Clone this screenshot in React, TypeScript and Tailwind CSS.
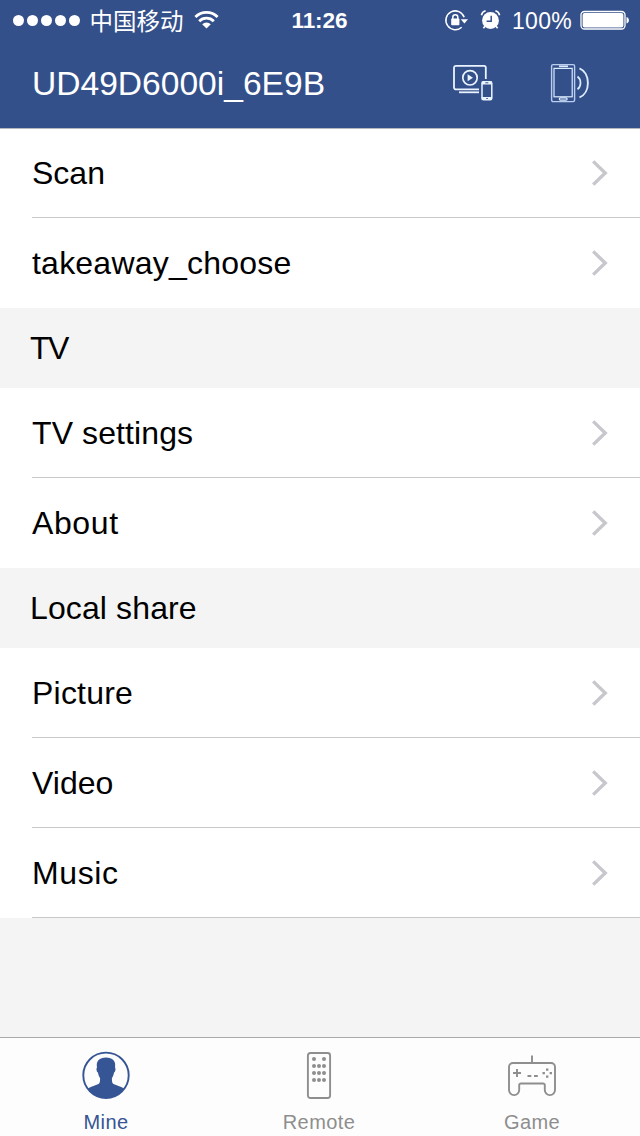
import React from 'react';

function StatusBar() {
  return (
    <div className="flex h-10 items-center text-white">
      <div className="ml-[12.5px] flex w-[68px] items-center gap-[3.1px]">
        {[0, 1, 2, 3, 4].map((dot) => (
          <span key={dot} className="h-[11px] w-[11px] shrink-0 rounded-full bg-white" />
        ))}
      </div>
      <span className="ml-[9px] w-[96px] font-['Noto_Sans_CJK_SC',sans-serif] text-[23.5px] leading-10 font-normal whitespace-nowrap">
        中国移动
      </span>
      <svg className="ml-[8.5px] h-[18px] w-[25px]" viewBox="0 0 25 18" fill="none" stroke="white">
        <path d="M1.4 6.1a15.6 15.6 0 0 1 22.2 0" strokeWidth="2.8" />
        <path d="M5.2 10.2a10.2 10.2 0 0 1 14.6 0" strokeWidth="2.8" />
        <path d="M12.5 17.4l-4.3-4.2a6 6 0 0 1 8.6 0z" fill="white" stroke="none" />
      </svg>
      <span className="ml-[72.5px] w-[58px] pt-0.5 text-[22.5px] leading-10 font-bold tracking-[-0.1px] whitespace-nowrap">
        11:26
      </span>
      <svg className="ml-[94.5px] h-6 w-6" viewBox="0 0 24 24" fill="none" stroke="white" strokeWidth="1.5">
        <path d="M20.2 9.3A9.4 9.4 0 1 0 17.7 19.2" />
        <path d="M16.8 11.2h7.2l-3.6 4.4z" fill="white" stroke="none" />
        <rect x="7.2" y="10.6" width="8.2" height="6.6" rx=".7" fill="white" stroke="none" />
        <path d="M8.8 11.4V9.2a2.5 2.5 0 0 1 5 0v2.2" />
      </svg>
      <svg className="ml-[12px] h-6 w-[22px]" viewBox="0 0 22 24" fill="none" stroke="white">
        <circle cx="10.5" cy="12.5" r="8.4" fill="white" stroke="none" />
        <path d="M1.4 7.2a6 6 0 0 1 4.2-4.4M19.6 7.2a6 6 0 0 0-4.2-4.4" strokeWidth="1.6" />
        <path d="M4.9 18.2l-1.5 2.1M16.1 18.2l1.5 2.1" strokeWidth="1.6" />
        <path d="M11.2 7.8v5.5H6.6" stroke="#34508a" strokeWidth="1.5" />
      </svg>
      <span className="ml-[10px] w-[62px] pt-0.5 text-[23px] leading-10 tracking-[0.3px] whitespace-nowrap">100%</span>
      <svg className="ml-[5.5px] h-5 w-[50px]" viewBox="0 0 50 20" fill="none">
        <rect x="1" y="1.5" width="44" height="17.5" rx="3.5" stroke="white" strokeWidth="1.3" />
        <rect x="2.6" y="3.1" width="40.8" height="14.3" rx="2" fill="white" />
        <path d="M46.5 7c3.2 1 3.2 5.6 0 6.6z" fill="white" />
      </svg>
    </div>
  );
}

function CastIcon() {
  return (
    <svg className="h-[38px] w-[42px]" viewBox="0 0 42 38" fill="none" stroke="#e9f4ff">
      <path d="M27 25.4H4a2 2 0 0 1-2-2V3.8a2 2 0 0 1 2-2h28a1.8 1.8 0 0 1 1.8 1.8V15" strokeWidth="1.8" />
      <path d="M7 28.3h20" strokeWidth="1.8" />
      <circle cx="18" cy="13.8" r="7.2" strokeWidth="1.7" />
      <path d="M15.6 10.3v7l5.4-3.5z" fill="#e9f4ff" stroke="none" />
      <rect x="30" y="17.7" width="9.8" height="18" rx="1.5" strokeWidth="1.5" />
      <path d="M29.8 19h10M29.8 34.3h10" strokeWidth="2.8" />
      <path d="M33.3 18.8h3M34.3 34.5h1.5" stroke="#34508a" />
    </svg>
  );
}

function PhoneWaveIcon() {
  return (
    <svg className="-mt-px h-10 w-[42px]" viewBox="0 0 42 40" fill="none" stroke="#dcecff">
      <rect x="1.6" y="1.6" width="23" height="37" rx="1.5" strokeWidth="1.4" stroke="#b9cdf0" />
      <rect x="4" y="5.4" width="18.2" height="28.4" strokeWidth="1.2" />
      <path d="M9 3.3h9" strokeWidth="1.7" />
      <rect x="9.3" y="34.9" width="7.8" height="2.2" rx="1" strokeWidth="1.2" />
      <path d="M27.5 13.5c4 3 4 9.8 0 12.8" strokeWidth="1.7" />
      <path d="M29.5 5.4c11.2 4.6 11.2 24.4 0 29" strokeWidth="1.9" />
    </svg>
  );
}

type RowProps = { label: string; tracking?: string; divided?: boolean };

function Row({ label, tracking = 'tracking-[0.22px]', divided = true }: RowProps) {
  return (
    <div className="h-[90px] bg-white pl-8">
      <div
        className={`flex h-full items-center justify-between border-b pr-[31px] ${divided ? 'border-[#c9c9cb]' : 'border-transparent'}`}
      >
        <span className={`text-[32px] leading-[90px] ${tracking}`}>{label}</span>
        <svg className="mt-px h-7 w-[18px]" viewBox="0 0 18 28" fill="none" stroke="#c7c7cc" strokeWidth="3.4">
          <path d="M2.2 2.4L14.2 14 2.2 25.6" />
        </svg>
      </div>
    </div>
  );
}

function SectionTitle({ label, tracking }: { label: string; tracking: string }) {
  return <h2 className={`h-20 bg-[#f4f4f4] pl-[30px] text-[32px] leading-[80px] ${tracking}`}>{label}</h2>;
}

function MineIcon() {
  return (
    <svg className="-ml-px h-12 w-12" viewBox="0 0 48 48">
      <circle cx="24" cy="24.3" r="22.7" fill="none" stroke="#365594" strokeWidth="1.9" />
      <path
        d="M24 47c-7.6 0-14-3.6-18-9.6 3.6-2.2 7.6-2.9 10-4.1 1.9-1 2.1-2.6 2.1-6.1-1.2-1.6-1.8-3.6-2.1-5.6-1.4-.5-2-4.6-1-5.2C13.8 10 17.6 6.6 24 6.6s10.2 3.4 9 9.8c1 .6.4 4.7-1 5.2-.3 2-.9 4-2.1 5.6 0 3.5.2 5.1 2.1 6.1 2.4 1.2 6.4 1.9 10 4.1-4 6-10.4 9.6-18 9.6z"
        fill="#365594"
      />
    </svg>
  );
}

const remoteKeys = [
  [13, 7], [23, 7],
  [13, 14], [18, 14], [23, 14],
  [13, 21], [18, 21], [23, 21],
  [13, 28], [18, 28], [23, 28],
];

function RemoteIcon() {
  return (
    <svg className="mt-px -mb-px -ml-0.5 h-12 w-9" viewBox="0 0 36 48" fill="none">
      <rect x="6.9" y="1" width="22.2" height="45" rx="2.5" stroke="#8e8e8e" strokeWidth="1.9" />
      {remoteKeys.map(([x, y]) => (
        <circle key={`${x}-${y}`} cx={x} cy={y} r="2" fill="#8e8e8e" />
      ))}
    </svg>
  );
}

function GameIcon() {
  return (
    <svg className="-ml-0.5 h-12 w-[50px]" viewBox="0 0 50 48" fill="none" stroke="#8e8e8e" strokeWidth="1.9">
      <path d="M25 4.5v7.5" />
      <path d="M6 12h38a4 4 0 0 1 4 4v23a5.1 5.1 0 0 1-10.2 0v-4.8a1.7 1.7 0 0 0-1.7-1.7H13.9a1.7 1.7 0 0 0-1.7 1.7v4.8a5.1 5.1 0 0 1-10.2 0v-23a4 4 0 0 1 4-4z" />
      <path d="M6 22h8M10 18v8M20.5 25h3.8M27 25h3.8" />
      <path d="M39 18.7h2.4M39 25.6h2.4M35.5 22.1h2.4M42.6 22.1H45" strokeWidth="2.2" />
    </svg>
  );
}

function Tab({ label, active = false, children }: { label: string; active?: boolean; children: React.ReactNode }) {
  return (
    <div className="flex w-[213px] flex-col items-center pt-[13px]">
      {children}
      <span className={`mt-[11px] -ml-px text-[20px] leading-6 tracking-[0.4px] ${active ? 'text-[#365594]' : 'text-[#8e8e8e]'}`}>
        {label}
      </span>
    </div>
  );
}

export default function App() {
  return (
    <div className="flex h-[1136px] w-[640px] flex-col overflow-hidden bg-[#f4f4f4] font-['Liberation_Sans',Arial,sans-serif] text-black">
      <header className="relative h-[129px] shrink-0 border-b border-[#b4b8be] bg-[#34508a]">
        <StatusBar />
        <div className="flex h-[88px] items-center pr-12 pl-8 text-white">
          <h1 className="flex-1 text-[33.6px] leading-[86px]">UD49D6000i_6E9B</h1>
          <div className="flex items-center gap-[56px] pb-0.5">
            <CastIcon />
            <PhoneWaveIcon />
          </div>
        </div>
      </header>
      <main className="-mt-px flex-1">
        <Row label="Scan" tracking="tracking-[0px]" />
        <Row label="takeaway_choose" divided={false} />
        <SectionTitle label="TV" tracking="tracking-[-1.5px]" />
        <Row label="TV settings" tracking="tracking-[0.1px]" />
        <Row label="About" tracking="tracking-[0.6px]" divided={false} />
        <SectionTitle label="Local share" tracking="tracking-[0.12px]" />
        <Row label="Picture" />
        <Row label="Video" tracking="tracking-[0px]" />
        <Row label="Music" tracking="tracking-[0.6px]" />
      </main>
      <nav className="flex h-[99px] shrink-0 border-t border-[#aaaaaa] bg-[#fdfdfd]">
        <Tab label="Mine" active>
          <MineIcon />
        </Tab>
        <Tab label="Remote">
          <RemoteIcon />
        </Tab>
        <Tab label="Game">
          <GameIcon />
        </Tab>
      </nav>
    </div>
  );
}
